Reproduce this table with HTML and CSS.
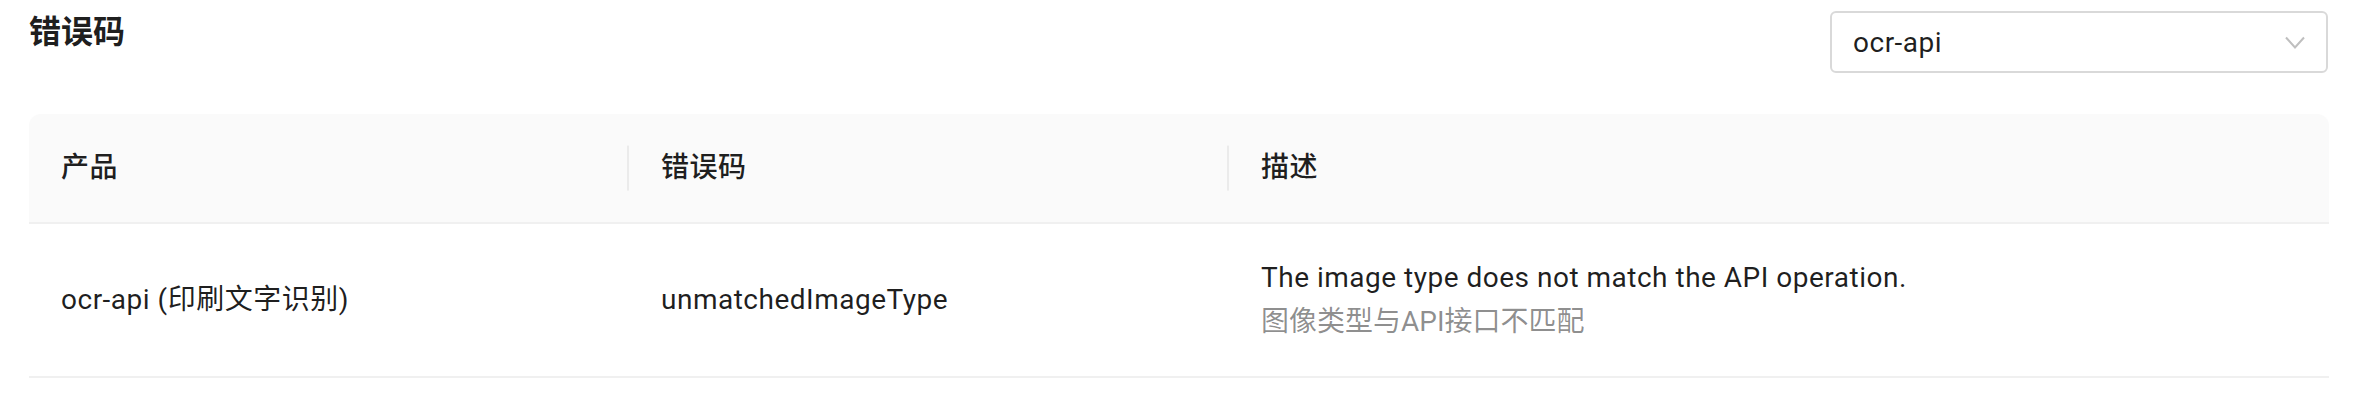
FILE: index.html
```html
<!DOCTYPE html>
<html lang="zh-CN">
<head>
    <meta charset="UTF-8">
    <meta name="viewport" content="width=device-width, initial-scale=1.0">
    <title>错误码</title>
    <link rel="stylesheet" href="styles.css">
</head>

<body>
    <div class="wrapper">
        <div class="topbar">
            <h2 class="title">错误码</h2>
            <div class="select">
                <span class="select-value">ocr-api</span>
                <svg class="select-arrow" width="20" height="13" viewBox="0 0 20 13">
                    <polyline points="1,1.5 10,11.5 19,1.5" fill="none" stroke="#bfbfbf" stroke-width="2"/>
                </svg>
            </div>
        </div>

        <table class="codes">
            <colgroup>
                <col class="col-product">
                <col class="col-code">
                <col>
            </colgroup>
            <thead>
                <tr>
                    <th>产品</th>
                    <th>错误码</th>
                    <th>描述</th>
                </tr>
            </thead>
            <tbody>
                <tr>
                    <td>ocr-api (印刷文字识别)</td>
                    <td>unmatchedImageType</td>
                    <td>
                        <div>The image type does not match the API operation.</div>
                        <div class="desc-cn">图像类型与API接口不匹配</div>
                    </td>
                </tr>
            </tbody>
        </table>
    </div>
</body>
</html>
```

FILE: styles.css
```css
body {
    margin: 0;
    padding: 0;
    background: #ffffff;
    color: rgba(0, 0, 0, 0.88);
    font-family: "Roboto", "Noto Sans CJK SC", sans-serif;
}

.wrapper {
    width: 2300px;
    margin-left: 29px;
    padding-top: 8px;
}

.topbar {
    display: flex;
    justify-content: space-between;
    align-items: flex-start;
}

.title {
    margin: 0;
    font-size: 32px;
    line-height: 48px;
    font-weight: 600;
}

.select {
    margin-top: 3px;
    margin-right: 1px;
    width: 498px;
    height: 62px;
    box-sizing: border-box;
    border: 2px solid #d9d9d9;
    border-radius: 6px;
    padding: 0 21px 0 21px;
    display: flex;
    align-items: center;
    justify-content: space-between;
    font-size: 28px;
    letter-spacing: 0.5px;
}

.select-arrow {
    display: block;
}

.codes {
    margin-top: 41px;
    width: 100%;
    border-collapse: separate;
    border-spacing: 0;
    table-layout: fixed;
    font-size: 28px;
    line-height: 44px;
    letter-spacing: 0.5px;
}

.col-product {
    width: 600px;
}

.col-code {
    width: 600px;
}

.codes th {
    position: relative;
    text-align: left;
    font-weight: 500;
    padding: 32px;
    background: #fafafa;
    border-bottom: 2px solid #f0f0f0;
}

.codes th:first-child {
    border-top-left-radius: 12px;
}

.codes th:last-child {
    border-top-right-radius: 12px;
}

.codes th:not(:last-child)::before {
    content: "";
    position: absolute;
    right: 0;
    top: 50%;
    width: 2px;
    height: 1.6em;
    transform: translateY(-50%);
    background: rgba(0, 0, 0, 0.06);
}

.codes td {
    padding: 32px;
    border-bottom: 2px solid #f0f0f0;
    vertical-align: middle;
}

.desc-cn {
    color: rgba(0, 0, 0, 0.45);
    letter-spacing: 0;
}
```
